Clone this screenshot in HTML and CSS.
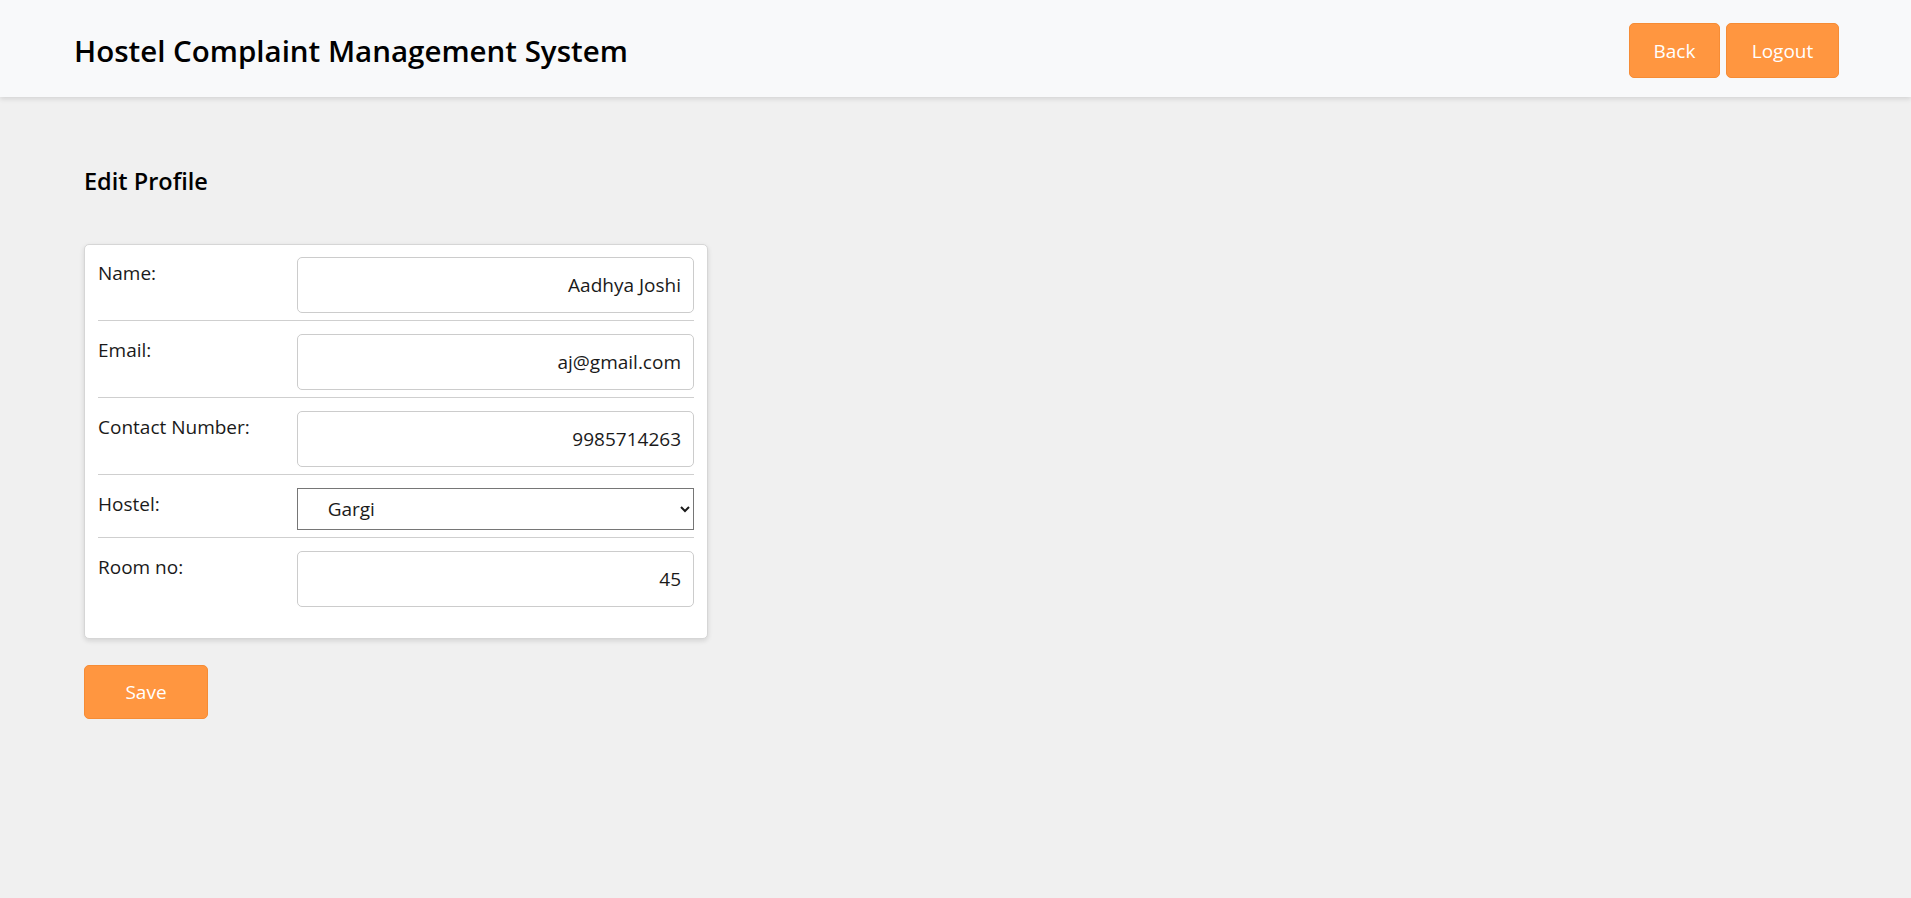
FILE: index.html
```html
<!DOCTYPE html>
<html lang="en">
<head>
<meta charset="utf-8">
<title>Edit Profile</title>
<link rel="stylesheet" href="styles.css">
</head>
<body>
<header class="topbar">
  <h1 class="brand">Hostel Complaint Management System</h1>
  <nav class="top-actions">
    <button class="btn btn-back" type="button">Back</button>
    <button class="btn btn-logout" type="button">Logout</button>
  </nav>
</header>
<main class="content">
  <h2 class="page-title">Edit Profile</h2>
  <form class="profile-form">
    <div class="card">
      <div class="row">
        <label class="row-label" for="name">Name:</label>
        <input class="field" id="name" type="text" value="Aadhya Joshi">
      </div>
      <div class="row">
        <label class="row-label" for="email">Email:</label>
        <input class="field" id="email" type="text" value="aj@gmail.com">
      </div>
      <div class="row">
        <label class="row-label" for="contact">Contact Number:</label>
        <input class="field" id="contact" type="text" value="9985714263">
      </div>
      <div class="row row-select">
        <label class="row-label" for="hostel">Hostel:</label>
        <select class="select" id="hostel">
          <option>Gargi</option>
          <option>Maitreyi</option>
        </select>
      </div>
      <div class="row row-last">
        <label class="row-label" for="room">Room no:</label>
        <input class="field" id="room" type="text" value="45">
      </div>
    </div>
    <button class="btn btn-save" type="button">Save</button>
  </form>
</main>
</body>
</html>
```
FILE: styles.css
```css
* { box-sizing: border-box; }

body {
  margin: 0;
  background: #f0f0f0;
  font-family: "Open Sans", "Noto Sans", sans-serif;
  color: #000;
}

.topbar {
  height: 97px;
  background: #f8f9fa;
  box-shadow: 0 2px 5px rgba(0, 0, 0, 0.12);
  display: flex;
  align-items: center;
  justify-content: space-between;
  padding: 0 72px 0 74px;
}

.brand {
  margin: 0;
  font-size: 29.5px;
  font-weight: 600;
  line-height: 1.2;
  padding-top: 4px;
}

.top-actions {
  display: flex;
  gap: 6px;
  padding-top: 4px;
}

.btn {
  background: #ff9640;
  color: #fff;
  border: 1px solid #f68c35;
  border-radius: 5px;
  font-family: inherit;
  font-size: 19px;
  height: 55px;
  padding: 0;
  cursor: pointer;
}

.btn-back { width: 91px; }
.btn-logout { width: 113px; }

.content {
  padding: 70px 84px 40px;
}

.page-title {
  margin: 0 0 48px;
  font-size: 23.5px;
  font-weight: 600;
  line-height: 1.25;
}

.card {
  width: 624px;
  background: #fff;
  border: 1px solid #d6d6d6;
  border-radius: 5px;
  box-shadow: 0 2px 5px rgba(0, 0, 0, 0.12);
  padding: 12px 13px 24px;
}

.row {
  display: grid;
  grid-template-columns: 1fr 2fr;
  align-items: start;
  padding-bottom: 7px;
  border-bottom: 1px solid #cfcfcf;
}

.row + .row { margin-top: 13px; }

.row-label {
  font-size: 19px;
  line-height: 27px;
  padding-top: 3px;
  color: #1a1a1a;
}

.row-last { border-bottom: none; }

.field {
  width: 100%;
  height: 56px;
  border: 1px solid #cccccc;
  border-radius: 5px;
  padding: 0 12px;
  text-align: right;
  font-family: inherit;
  font-size: 19px;
  color: #1a1a1a;
  background: #fff;
}

.select {
  width: 100%;
  height: 42px;
  border: 1px solid #767676;
  border-radius: 0;
  padding: 0 8px 0 26px;
  font-family: inherit;
  font-size: 19px;
  color: #1a1a1a;
  background: #fff;
}

.btn-save {
  display: block;
  margin-top: 26px;
  width: 124px;
  height: 54px;
}
```
